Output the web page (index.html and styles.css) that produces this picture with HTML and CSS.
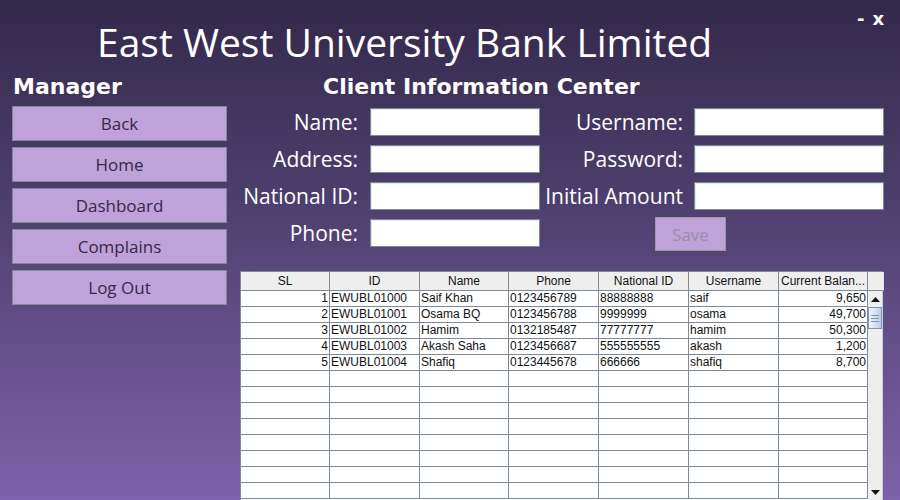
FILE: index.html
```html
<!DOCTYPE html>
<html>
<head>
<meta charset="utf-8">
<link rel="stylesheet" href="styles.css">
</head>
<body>
<div class="app">
  <header class="top">
    <h1 class="title">East West University Bank Limited</h1>
    <div class="winctl"><span>-</span><span>x</span></div>
  </header>
  <div class="main">
    <aside class="side">
      <h2 class="heading">Manager</h2>
      <nav class="menu">
        <button class="btn">Back</button>
        <button class="btn">Home</button>
        <button class="btn">Dashboard</button>
        <button class="btn">Complains</button>
        <button class="btn">Log Out</button>
      </nav>
    </aside>
    <section class="content">
      <h2 class="heading heading-center">Client Information Center</h2>
      <div class="form">
        <label class="lbl">Name:</label><input class="inp" type="text">
        <label class="lbl lbl-r">Username:</label><input class="inp" type="text">
        <label class="lbl">Address:</label><input class="inp" type="text">
        <label class="lbl lbl-r">Password:</label><input class="inp" type="text">
        <label class="lbl">National ID:</label><input class="inp" type="text">
        <label class="lbl lbl-r">Initial Amount</label><input class="inp" type="text">
        <label class="lbl">Phone:</label><input class="inp" type="text">
        <div class="save-cell"><button class="btn save">Save</button></div>
      </div>
      <div class="tbl">
        <div class="thead">
          <div class="th">SL</div>
          <div class="th">ID</div>
          <div class="th">Name</div>
          <div class="th">Phone</div>
          <div class="th">National ID</div>
          <div class="th">Username</div>
          <div class="th">Current Balan...</div>
          <div class="th corner"></div>
        </div>
        <div class="tbody-wrap">
          <div class="tbody">
            <div class="td num">1</div><div class="td">EWUBL01000</div><div class="td">Saif Khan</div><div class="td">0123456789</div><div class="td">88888888</div><div class="td">saif</div><div class="td num">9,650</div>
            <div class="td num">2</div><div class="td">EWUBL01001</div><div class="td">Osama BQ</div><div class="td">0123456788</div><div class="td">9999999</div><div class="td">osama</div><div class="td num">49,700</div>
            <div class="td num">3</div><div class="td">EWUBL01002</div><div class="td">Hamim</div><div class="td">0132185487</div><div class="td">77777777</div><div class="td">hamim</div><div class="td num">50,300</div>
            <div class="td num">4</div><div class="td">EWUBL01003</div><div class="td">Akash Saha</div><div class="td">0123456687</div><div class="td">555555555</div><div class="td">akash</div><div class="td num">1,200</div>
            <div class="td num">5</div><div class="td">EWUBL01004</div><div class="td">Shafiq</div><div class="td">0123445678</div><div class="td">666666</div><div class="td">shafiq</div><div class="td num">8,700</div>
            <div class="td"></div><div class="td"></div><div class="td"></div><div class="td"></div><div class="td"></div><div class="td"></div><div class="td"></div>
            <div class="td"></div><div class="td"></div><div class="td"></div><div class="td"></div><div class="td"></div><div class="td"></div><div class="td"></div>
            <div class="td"></div><div class="td"></div><div class="td"></div><div class="td"></div><div class="td"></div><div class="td"></div><div class="td"></div>
            <div class="td"></div><div class="td"></div><div class="td"></div><div class="td"></div><div class="td"></div><div class="td"></div><div class="td"></div>
            <div class="td"></div><div class="td"></div><div class="td"></div><div class="td"></div><div class="td"></div><div class="td"></div><div class="td"></div>
            <div class="td"></div><div class="td"></div><div class="td"></div><div class="td"></div><div class="td"></div><div class="td"></div><div class="td"></div>
            <div class="td"></div><div class="td"></div><div class="td"></div><div class="td"></div><div class="td"></div><div class="td"></div><div class="td"></div>
            <div class="td"></div><div class="td"></div><div class="td"></div><div class="td"></div><div class="td"></div><div class="td"></div><div class="td"></div>
          </div>
          <div class="scroll">
            <div class="sb-btn"><svg width="9" height="5" viewBox="0 0 9 5"><path d="M0 5 L4.5 0 L9 5 Z" fill="#111"/></svg></div>
            <div class="thumb"><span></span><span></span><span></span></div>
            <div class="track"></div>
            <div class="sb-btn"><svg width="9" height="5" viewBox="0 0 9 5"><path d="M0 0 L9 0 L4.5 5 Z" fill="#111"/></svg></div>
          </div>
        </div>
      </div>
    </section>
  </div>
</div>
</body>
</html>
```

FILE: styles.css
```css
* { box-sizing: border-box; }
html, body { margin: 0; padding: 0; }
body {
  width: 900px;
  height: 500px;
  overflow: hidden;
  background: linear-gradient(180deg, #33294a 0%, #4d3f6d 40%, #7c62aa 100%);
  font-family: "Open Sans", "Noto Sans", sans-serif;
  color: #fff;
}
.app { display: flex; flex-direction: column; height: 500px; }
.top {
  display: flex;
  align-items: flex-start;
  height: 75px;
  padding-left: 97px;
  padding-right: 16px;
}
.title {
  margin: 0;
  padding-top: 17px;
  font-family: "Open Sans", sans-serif;
  font-weight: 400;
  font-size: 39px;
  line-height: 50px;
  color: #fff;
}
.winctl {
  margin-left: auto;
  display: flex;
  gap: 8px;
  padding-top: 8px;
  font-family: "DejaVu Sans", sans-serif;
  font-weight: bold;
  font-size: 18px;
  line-height: 22px;
}
.main { display: flex; flex: 1; }
.side { width: 240px; padding-left: 12px; }
.heading {
  margin: 0;
  height: 32px;
  font-family: "DejaVu Sans", sans-serif;
  font-weight: bold;
  font-size: 22px;
  line-height: 26px;
  color: #fff;
}
.side .heading { padding-left: 1px; }
.heading-center { padding-left: 83px; height: 34px; }
.menu { display: flex; flex-direction: column; gap: 6px; width: 215px; }
.btn {
  height: 35px;
  background: #c0a2da;
  border: 1px solid #7d8a98;
  font-family: "Open Sans", sans-serif;
  font-size: 17px;
  color: #35284a;
  padding: 0;
  line-height: 31px;
}
.content { width: 644px; }
.form {
  display: grid;
  grid-template-columns: 130px 170px 154px 190px;
  row-gap: 9px;
  grid-auto-rows: 28px;
}
.lbl {
  text-align: right;
  font-size: 21px;
  line-height: 28px;
  color: #fff;
  white-space: nowrap;
  padding-right: 12px;
}
.lbl-r { padding-right: 11px; }
.inp {
  height: 28px;
  background: #fff;
  border: 1px solid #7d8a98;
  box-shadow: inset 1px 1px 0 #e4e8ee;
  padding: 0;
}
.save-cell {
  grid-column: 3 / span 2;
  padding-left: 115px;
  margin-top: -2px;
}
.save {
  width: 71px;
  height: 34px;
  color: #9a8fa6;
  border-color: #9a9a9a;
}
.tbl {
  margin-top: 24px;
  width: 643px;
  background: #fff;
  font-family: "Liberation Sans", Arial, sans-serif;
  font-size: 12px;
  color: #111;
}
.thead {
  display: grid;
  grid-template-columns: 89px 90px 89px 90px 90px 90px 89px 16px;
  height: 20px;
  border-top: 1px solid #7d8a98;
  border-left: 1px solid #7d8a98;
}
.th {
  background: #eeeeee;
  border-right: 1px solid #7d8a98;
  border-bottom: 1px solid #7d8a98;
  text-align: center;
  line-height: 18px;
  white-space: nowrap;
  overflow: hidden;
}
.th.corner { border-right-color: #dfe3e8; }
.tbody-wrap { display: flex; }
.tbody {
  display: grid;
  grid-template-columns: 89px 90px 89px 90px 90px 90px 89px;
  grid-auto-rows: 16px;
  border-left: 1px solid #7d8a98;
}
.td {
  border-right: 1px solid #7d8a98;
  border-bottom: 1px solid #7d8a98;
  line-height: 15px;
  padding: 0 1px;
  white-space: nowrap;
  overflow: hidden;
}
.td.num { text-align: right; }
.scroll {
  width: 16px;
  display: flex;
  flex-direction: column;
  background: #eeeeee;
  border-right: 1px solid #c8ced6;
  height: 209px;
}
.sb-btn {
  height: 16px;
  display: flex;
  align-items: center;
  justify-content: center;
  background: #eeeeee;
}
.thumb {
  height: 22px;
  border: 1px solid #7f95b8;
  background: linear-gradient(90deg, #eef3f9 0%, #d7e3f1 50%, #b9cde4 100%);
  display: flex;
  flex-direction: column;
  align-items: center;
  justify-content: center;
  gap: 2px;
}
.thumb span { display: block; width: 8px; height: 1px; background: #7f95b8; }
.track { flex: 1; }
```
